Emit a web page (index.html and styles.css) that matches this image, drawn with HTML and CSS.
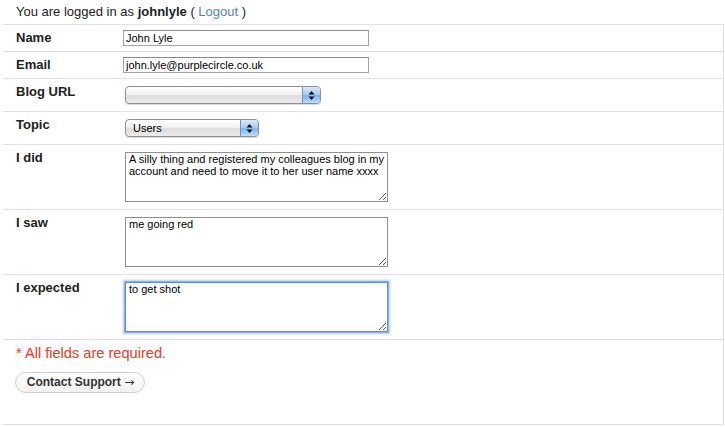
FILE: index.html
```html
<!DOCTYPE html>
<html>
<head>
<meta charset="utf-8">
<link rel="stylesheet" href="styles.css">
</head>
<body>
<div class="header">You are logged in as <b>johnlyle</b> ( <a class="link" href="#">Logout</a> )</div>
<form class="form">
  <div class="row">
    <label class="label">Name</label>
    <div class="field"><input class="text" type="text" value="John Lyle"></div>
  </div>
  <div class="row">
    <label class="label">Email</label>
    <div class="field"><input class="text" type="text" value="john.lyle@purplecircle.co.uk"></div>
  </div>
  <div class="row">
    <label class="label">Blog URL</label>
    <div class="field">
      <div class="select select-wide">
        <span class="select-value"></span>
        <span class="stepper"><svg width="7" height="11" viewBox="0 0 7 11"><path d="M3.5 1 L6.5 4.5 L0.5 4.5 Z" fill="#111"/><path d="M3.5 10 L6.5 6.5 L0.5 6.5 Z" fill="#111"/></svg></span>
      </div>
    </div>
  </div>
  <div class="row">
    <label class="label">Topic</label>
    <div class="field">
      <div class="select select-narrow">
        <span class="select-value">Users</span>
        <span class="stepper"><svg width="7" height="11" viewBox="0 0 7 11"><path d="M3.5 1 L6.5 4.5 L0.5 4.5 Z" fill="#111"/><path d="M3.5 10 L6.5 6.5 L0.5 6.5 Z" fill="#111"/></svg></span>
      </div>
    </div>
  </div>
  <div class="row">
    <label class="label">I did</label>
    <div class="field"><textarea class="area">A silly thing and registered my colleagues blog in my account and need to move it to her user name xxxx</textarea></div>
  </div>
  <div class="row">
    <label class="label">I saw</label>
    <div class="field"><textarea class="area">me going red</textarea></div>
  </div>
  <div class="row">
    <label class="label">I expected</label>
    <div class="field"><textarea class="area area-focus">to get shot</textarea></div>
  </div>
  <div class="footer">
    <p class="required">* All fields are required.</p>
    <button class="btn" type="button">Contact Support <span class="arrow">→</span></button>
  </div>
</form>
</body>
</html>
```

FILE: styles.css
```css
html, body {
  margin: 0;
  padding: 0;
  background: #fff;
}
body {
  font-family: "Liberation Sans", Arial, sans-serif;
  font-size: 13px;
  color: #222;
}
.header {
  padding: 4px 0 4px 16px;
  line-height: 16px;
  height: 16px;
}
.link {
  color: #4f86b3;
  text-decoration: none;
}
.form {
  margin: 0 0 0 3px;
  width: 720px;
  border-right: 1px solid #e2e2e2;
  border-bottom: 1px solid #e2e2e2;
}
.row {
  display: flex;
  border-top: 1px solid #e2e2e2;
  padding: 5px 0;
}
.label {
  width: 107px;
  padding-left: 13px;
  font-weight: bold;
  line-height: 16px;
  color: #222;
}
.field {
  display: flex;
  align-items: flex-start;
}
.text {
  box-sizing: border-box;
  width: 246px;
  height: 16px;
  margin: 0;
  padding: 0 2px;
  border: 1px solid #a5a5a5;
  border-top-color: #8a8a8a;
  font-family: "Liberation Sans", Arial, sans-serif;
  font-size: 11px;
  color: #000;
  background: #fff;
  outline: none;
}
.select {
  box-sizing: border-box;
  margin: 2px 0 2px 2px;
  height: 18px;
  display: flex;
  align-items: stretch;
  border: 1px solid #8e8e8e;
  border-radius: 4px;
  background: linear-gradient(#ffffff, #f2f2f2 45%, #dcdcdc 55%, #ececec);
  box-shadow: 0 1px 1px rgba(0,0,0,0.15);
  overflow: hidden;
}
.select-wide { width: 196px; }
.select-narrow { width: 134px; }
.select-value {
  flex: 1;
  padding-left: 7px;
  font-size: 11px;
  line-height: 16px;
  color: #000;
}
.stepper {
  width: 17px;
  display: flex;
  align-items: center;
  justify-content: center;
  border-left: 1px solid #6d93bf;
  background: linear-gradient(#d7e9fb, #a9cdf2 45%, #7fb3ea 55%, #bcdcf8);
}
.area {
  box-sizing: border-box;
  display: block;
  width: 263px;
  height: 50px;
  margin: 2px 0 2px 2px;
  padding: 0 3px;
  border: 1px solid #8f8f8f;
  font-family: "Liberation Sans", Arial, sans-serif;
  font-size: 11px;
  line-height: 12px;
  color: #000;
  background: #fff;
  resize: both;
  outline: none;
}
.area-focus {
  border-color: #5e8fcc;
  box-shadow: 0 0 0 1px #8fb4e4, 0 0 2px 2px rgba(110,160,220,0.55);
}
.footer {
  border-top: 1px solid #e2e2e2;
  height: 84px;
  padding-left: 12px;
}
.required {
  margin: 5px 0 0 1px;
  color: #e83a25;
  font-size: 14.6px;
  line-height: 17px;
}
.btn {
  margin-top: 10px;
  box-sizing: border-box;
  width: 130px;
  height: 21px;
  padding: 0 0 0 1px;
  border: 1px solid #cfcfcf;
  border-radius: 11px;
  background: linear-gradient(#ffffff, #f1f1f1);
  font-family: "Liberation Sans", Arial, sans-serif;
  font-weight: bold;
  font-size: 12px;
  color: #333;
  line-height: 19px;
  cursor: pointer;
}
.arrow {
  font-family: "DejaVu Sans", sans-serif;
  font-weight: normal;
  font-size: 12px;
}
```
